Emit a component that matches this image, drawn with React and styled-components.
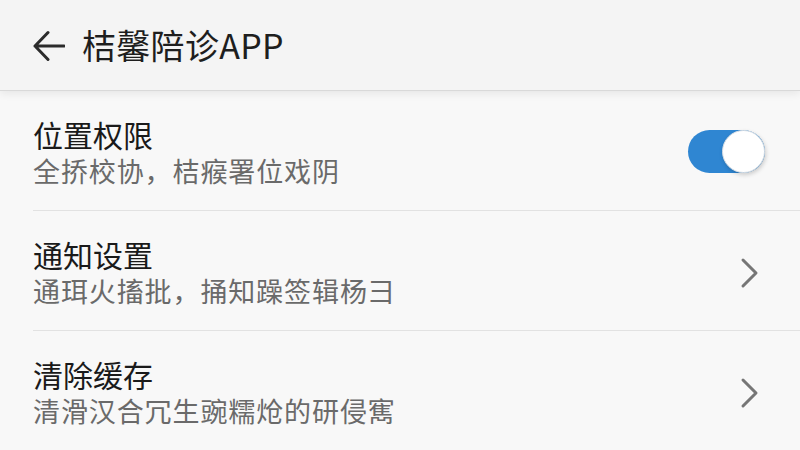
import React, { useState } from "react";
import styled, { createGlobalStyle } from "styled-components";

const Global = createGlobalStyle`
  html, body { margin: 0; padding: 0; background: #f8f8f8; }
  body { font-family: "Noto Sans CJK SC", "Noto Sans", sans-serif; }
  * { box-sizing: border-box; }
`;

const Page = styled.div`
  width: 800px;
  height: 450px;
  overflow: hidden;
  background: #f8f8f8;
  display: flex;
  flex-direction: column;
`;

const Header = styled.header`
  height: 91px;
  flex: none;
  display: flex;
  align-items: center;
  gap: 17px;
  padding-left: 33px;
  background: #f4f4f4;
  border-bottom: 1px solid #d9d9d9;
  box-shadow: 0 3px 8px rgba(0, 0, 0, 0.07);
  position: relative;
  z-index: 1;
`;

const BackIcon = styled.svg`
  width: 32px;
  height: 32px;
  flex: none;
  margin-top: 1px;
`;

const Title = styled.h1`
  margin: 0;
  font-size: 34px;
  font-weight: 400;
  color: #1e1e1e;
  line-height: 1;
  letter-spacing: 0.3px;
`;

const List = styled.div`
  display: flex;
  flex-direction: column;
`;

const Row = styled.div`
  margin-left: 33px;
  padding: 25px 35px 20px 0;
  display: flex;
  align-items: center;
  border-bottom: ${(p) => (p.$last ? "none" : "1px solid #e2e2e2")};
`;

const Texts = styled.div`
  flex: 1;
  display: flex;
  flex-direction: column;
`;

const RowTitle = styled.div`
  font-size: 30px;
  line-height: 36px;
  color: #1a1a1a;
`;

const RowSub = styled.div`
  font-size: 27px;
  line-height: 38px;
  color: #6a6a6a;
  letter-spacing: 0.9px;
`;

const Track = styled.button`
  width: 77px;
  height: 43px;
  border: none;
  padding: 0;
  border-radius: 22px;
  background: ${(p) => (p.$on ? "#2f86d2" : "#c8c8c8")};
  display: flex;
  align-items: center;
  justify-content: ${(p) => (p.$on ? "flex-end" : "flex-start")};
  cursor: pointer;
  margin-top: -4px;
`;

const Knob = styled.span`
  width: 43px;
  height: 43px;
  border-radius: 50%;
  background: #ffffff;
  border: 1px solid #d6dde4;
  box-shadow: 1px 2px 4px rgba(0, 0, 0, 0.18);
`;

const Chevron = styled.svg`
  width: 22px;
  height: 32px;
  flex: none;
  margin-right: 5px;
`;

const items = [
  { title: "位置权限", sub: "全挢校协，桔瘊署位戏阴", type: "toggle" },
  { title: "通知设置", sub: "通珥火搐批，捅知躁签辑杨彐", type: "link" },
  { title: "清除缓存", sub: "清滑汉合冗生豌糯炝的研侵寯", type: "link" },
];

export default function App() {
  const [on, setOn] = useState(true);
  return (
    <Page>
      <Global />
      <Header>
        <BackIcon viewBox="0 0 32 32" fill="none">
          <path
            d="M2 16 H31 M15 2.5 L2 16 L15 29.5"
            stroke="#2b2b2b"
            strokeWidth="3"
            strokeLinecap="round"
            strokeLinejoin="round"
          />
        </BackIcon>
        <Title>桔馨陪诊APP</Title>
      </Header>
      <List>
        {items.map((it, i) => (
          <Row key={it.title} $last={i === items.length - 1}>
            <Texts>
              <RowTitle>{it.title}</RowTitle>
              <RowSub>{it.sub}</RowSub>
            </Texts>
            {it.type === "toggle" ? (
              <Track $on={on} onClick={() => setOn(!on)}>
                <Knob />
              </Track>
            ) : (
              <Chevron viewBox="0 0 22 32" fill="none">
                <path
                  d="M5 3 L18 16 L5 29"
                  stroke="#767676"
                  strokeWidth="3"
                  strokeLinecap="round"
                  strokeLinejoin="round"
                />
              </Chevron>
            )}
          </Row>
        ))}
      </List>
    </Page>
  );
}
